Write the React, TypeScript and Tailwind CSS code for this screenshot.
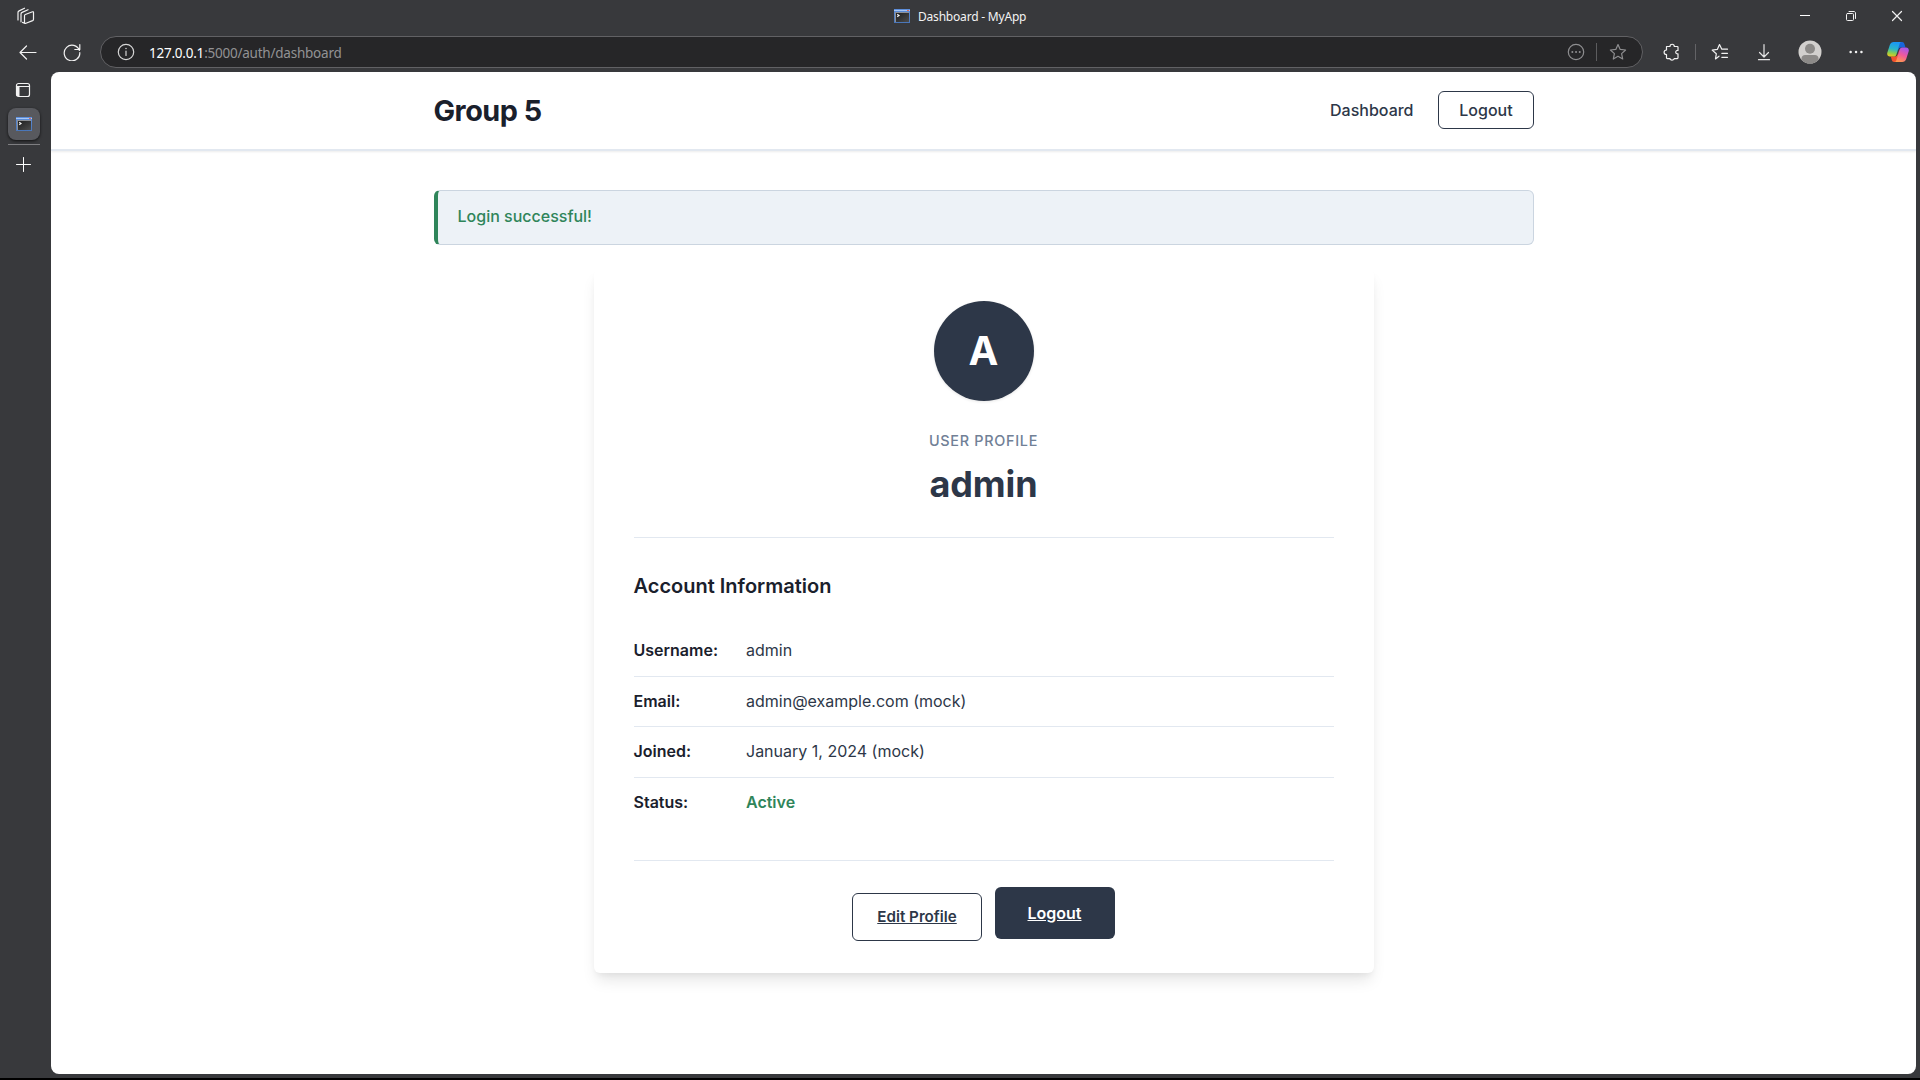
import type { ReactNode } from "react";

function TerminalIcon() {
  return (
    <svg width="16" height="15" viewBox="0 0 16 15" shapeRendering="crispEdges">
      <defs>
        <linearGradient id="term" x1="0" y1="0" x2="0" y2="1">
          <stop offset="0" stopColor="#5e8fdc" />
          <stop offset="1" stopColor="#4a76b8" />
        </linearGradient>
        <linearGradient id="screen" x1="0" y1="0" x2="1" y2="1">
          <stop offset="0" stopColor="#1c1c1c" />
          <stop offset="1" stopColor="#4a4a4a" />
        </linearGradient>
      </defs>
      <rect x="0" y="0" width="16" height="14" fill="url(#term)" />
      <rect x="0" y="1" width="16" height="1" fill="#a8c8f4" />
      <rect x="13" y="1" width="2" height="1" fill="#e06a5c" />
      <rect x="1" y="3" width="14" height="10" fill="#8d9095" />
      <rect x="1.5" y="3.5" width="13" height="9" fill="url(#screen)" />
      <path d="M3.2 5.2 5 6.5 3.2 7.8" stroke="#f2f2f2" strokeWidth="1.2" fill="none" shapeRendering="auto" />
    </svg>
  );
}

function Line({ size = 18, children, color = "#f2f2f2", className = "" }: { size?: number; children: ReactNode; color?: string; className?: string }) {
  return (
    <svg width={size} height={size} viewBox={`0 0 ${size} ${size}`} fill="none" stroke={color} strokeWidth="1.2" strokeLinecap="round" strokeLinejoin="round" className={`shrink-0 ${className}`}>
      {children}
    </svg>
  );
}

const STAR = "M9 1.6 11.2 6.4 16.6 7 12.6 10.6 13.7 16 9 13.3 4.3 16 5.4 10.6 1.4 7 6.8 6.4Z";

function Copilot() {
  return (
    <svg width="22" height="20" viewBox="0 0 22 20" className="shrink-0">
      <defs>
        <linearGradient id="cpA" x1="0.4" y1="0" x2="0.2" y2="1">
          <stop offset="0" stopColor="#1a98f5" />
          <stop offset="0.45" stopColor="#2bb6c8" />
          <stop offset="0.75" stopColor="#8fd04a" />
          <stop offset="1" stopColor="#f5c51c" />
        </linearGradient>
        <linearGradient id="cpB" x1="0.7" y1="0" x2="0.3" y2="1">
          <stop offset="0" stopColor="#a457f0" />
          <stop offset="0.5" stopColor="#f0599c" />
          <stop offset="1" stopColor="#ff9a4c" />
        </linearGradient>
      </defs>
      <path d="M12 0h3.2c1.2 0 1.8.8 2.2 1.9l1.1 3.6H14c-1.5 0-2.2.7-2.6 2L10 12Z" fill="#1766dd" />
      <path d="M10 20H7.2c-1.4 0-2-.8-2.4-2l-1-3.5H8c1.5 0 2.2-.7 2.6-2L12 8Z" fill="#f1512e" />
      <path d="M6.8 0h7.7c-1 0-1.6.8-2 2.2L9.6 12c-.5 1.8-1.300 2.600-3 2.600H3C.9 14.600-.2 13 .3 10.800L2.800 3C3.500 1 4.800 0 6.800 0Z" fill="url(#cpA)" />
      <path d="M15.200 20H7.500c1 0 1.600-.8 2-2.200L12.400 8c.5-1.800 1.300-2.600 3-2.600H19c2.100 0 3.200 1.600 2.700 3.800L19.200 17c-.7 2-2 3-4 3Z" fill="url(#cpB)" />
    </svg>
  );
}

function TitleBar() {
  return (
    <div className="flex h-8 items-center pl-[17px]">
      <Line>
        <path d="M1 13V5.500c0-.8.4-1.300 1.100-1.600L7.500 1.200" />
        <path d="M4 14.800V7c0-.8.4-1.300 1.100-1.600L11 2.700" />
        <path d="M8.300 7.500 15.500 4.800c.6-.2 1 .1 1 .7v6.700c0 .7-.3 1.100-.9 1.400L9 16.300c-.9.4-1.500 0-1.500-.8V8.800c0-.7.2-1 .8-1.300ZM7.500 16.300 5.500 15.400" />
      </Line>
      <div className="ml-[859px] flex items-center">
        <TerminalIcon />
        <span className="mt-px ml-2 w-[110px] text-[12px] leading-4 tracking-[-0.2px] whitespace-nowrap text-[#f3f3f3]">Dashboard - MyApp</span>
      </div>
      <div className="ml-auto flex items-center pr-[13px]">
        <Line size={20} className="mr-[26px]"><path d="M5 9.500h10" strokeLinecap="butt" strokeWidth="1" stroke="#fff" /></Line>
        <Line size={20} className="mr-[26px]">
          <rect x="5.500" y="7.500" width="7" height="7" rx="1" strokeWidth="1" />
          <path d="M8 5.500h5c.8 0 1.500.7 1.500 1.500v5.500" strokeWidth="1" />
        </Line>
        <Line size={20}><path d="m5.500 5.500 9 9m0-9-9 9" /></Line>
      </div>
    </div>
  );
}

function Toolbar() {
  return (
    <div className="flex h-10 items-center pl-[19px]">
      <Line className="-mt-px"><path d="M17 9.500H1M7.500 3 1 9.500 7.500 16" /></Line>
      <Line className="ml-[26px]">
        <path d="M16.400 7.500A7.800 7.800 0 1 0 16.800 9.500M16.800 1.500v5h-5" />
      </Line>
      <div className="ml-[19px] flex h-8 w-[1543px] items-center rounded-full border border-[#616164] bg-[#262628] pr-[15px] pl-4">
        <Line color="#d6d6d6">
          <circle cx="9" cy="9" r="7.700" />
          <path d="M9 8v4.500" />
          <path d="M9 5.500v.1" strokeWidth="1.500" />
        </Line>
        <span className="mt-px ml-[14px] text-[13.500px] leading-5 tracking-[-0.230px] whitespace-nowrap text-[#929294]">
          <span className="text-white">127.0.0.1</span>:5000/auth/dashboard
        </span>
        <Line color="#8e8e90" className="ml-auto">
          <circle cx="9" cy="9" r="7.700" />
          <path d="M5.300 9h.1M9 9h.1M12.700 9h.1" strokeWidth="1.900" />
        </Line>
        <span className="mr-[12px] ml-[11px] h-[18px] w-px bg-[#5c5c5e]" />
        <Line color="#8e8e90"><path d={STAR} /></Line>
      </div>
      <Line className="ml-5" size={18}>
        <path d="M3.500 3.500H7C7 .5 11.300.5 11.300 3.500h3c.4 0 .7.300.7.700v3.300c-3-.4-3 3.700 0 3.300v4c0 .500-.300.800-.8.800h-3c0 2-4.200 2-4.200 0H4.300c-.5 0-.8-.300-.8-.8V11.500C.3 11.500.3 7 3.500 7Z" />
      </Line>
      <span className="ml-[14px] h-4 w-px bg-[#636366]" />
      <Line className="ml-[15px]">
        <path d="M8 13.200 4.500 15.900 5.300 10.800 1.200 7.100 6.300 6.400 8.500 1.600 10.800 6.200H16.500M10.800 10.300h5.700M10.800 14.300h5.700" />
      </Line>
      <Line className="ml-[26px]" color="#e4e4e4">
        <path d="M9 1.500v12M4.500 9.500 9 14l4.500-4.500M3.500 16.700h11" />
      </Line>
      <svg width="24" height="24" viewBox="0 0 24 24" className="ml-[25px] shrink-0">
        <defs><clipPath id="face"><circle cx="12" cy="12" r="11.500" /></clipPath></defs>
        <circle cx="12" cy="12" r="11.500" fill="#d2d0ce" />
        <g clipPath="url(#face)" fill="#8c8a88">
          <circle cx="12" cy="8.700" r="5" />
          <path d="M3.500 24v-5.500c0-2.200 1.500-3.500 3.500-3.500h10c2 0 3.500 1.300 3.500 3.500V24Z" />
        </g>
      </svg>
      <Line className="ml-[25px]">
        <path d="M3.600 9h.1M9 9h.1M14.400 9h.1" strokeWidth="2.400" />
      </Line>
      <div className="ml-[22px]"><Copilot /></div>
    </div>
  );
}

function SideBar() {
  return (
    <div className="flex w-[51px] flex-col items-start pt-[9px]">
      <Line className="ml-[14px]">
        <rect x="2.500" y="2.500" width="13" height="13" rx="2" />
        <path d="M2.500 5.500h13" />
        <path d="M4 6v9" strokeWidth="3" strokeLinecap="butt" />
      </Line>
      <div className="mt-[9px] ml-2 flex size-8 items-center justify-center rounded-lg bg-[#58595e] shadow-[0_1px_3px_rgba(0,0,0,0.7)]">
        <TerminalIcon />
      </div>
      <span className="mt-1 ml-2 h-px w-8 bg-[#7e7e81]" />
      <Line className="mt-[10px] ml-[14px]"><path d="M9.500 2.500v14M2.500 9.500h14" strokeWidth="1" stroke="#fff" /></Line>
    </div>
  );
}

const ROWS = [
  { label: "Username:", value: "admin" },
  { label: "Email:", value: "admin@example.com (mock)" },
  { label: "Joined:", value: "January 1, 2024 (mock)" },
];

function Page() {
  return (
    <main className="mr-1 mb-1 flex flex-1 flex-col overflow-hidden rounded-lg bg-white font-[Inter,sans-serif] text-[16px] leading-[25.600px] text-[#2d3748]">
      <header className="h-[79px] shrink-0 border-b-2 border-[#e2e8f0] shadow-[0_1px_2px_rgba(0,0,0,0.08)]">
        <div className="mx-auto flex h-[77px] w-[1100px] items-center justify-between">
          <h1 className="text-[28.800px] font-bold tracking-[-0.5px] text-[#1a202c]">Group 5</h1>
          <nav className="flex items-center gap-6 font-medium">
            <a>Dashboard</a>
            <a className="-mt-px flex h-[38px] w-24 items-center justify-center rounded-md border border-[#2d3748] pt-px pl-px">Logout</a>
          </nav>
        </div>
      </header>
      <div className="mx-auto mt-[39px] h-[55px] w-[1100px] shrink-0 rounded-md border border-l-4 border-[#cbd5e0] border-l-[#2f855a] bg-[#edf2f7] pt-[13px] pl-5 font-medium text-[#2f855a]">
        Login successful!
      </div>
      <section className="mx-auto mt-6 flex h-[704px] w-[780px] shrink-0 flex-col rounded-md bg-white px-10 pt-8 shadow-[0_10px_15px_-3px_rgba(0,0,0,0.1),0_4px_6px_-2px_rgba(0,0,0,0.05)]">
        <div className="flex h-[237px] flex-col items-center border-b border-[#e2e8f0]">
          <div className="flex size-[100px] items-center justify-center rounded-full bg-[#2d3748] text-[40px] font-bold text-white shadow-[0_1px_3px_rgba(0,0,0,0.1)]">A</div>
          <p className="mt-[27px] text-[14.400px] font-medium tracking-[0.720px] text-[#718096] uppercase">User Profile</p>
          <h2 className="mt-[7px] text-[36px] leading-[46px] font-bold tracking-[-0.150px]">admin</h2>
        </div>
        <h3 className="mt-8 text-[20px] leading-8 font-semibold text-[#1a202c]">Account Information</h3>
        <dl className="mt-6 flex flex-col">
          {ROWS.map((row) => (
            <div key={row.label} className="flex h-[50.600px] items-center border-b border-[#e2e8f0]">
              <dt className="w-[112.500px] font-semibold text-[#1a202c]">{row.label}</dt>
              <dd>{row.value}</dd>
            </div>
          ))}
          <div className="flex h-[49.600px] items-center">
            <dt className="w-[112.500px] font-semibold text-[#1a202c]">Status:</dt>
            <dd className="font-semibold text-[#2f855a]">Active</dd>
          </div>
        </dl>
        <div className="mt-[33px] flex items-start justify-center border-t border-[#e2e8f0] pt-[26px]">
          <a className="mt-[6px] flex h-12 w-[130px] items-center justify-center rounded-md border border-[#2d3748] pb-px text-[15.200px] font-semibold underline">Edit Profile</a>
          <a className="ml-[13px] flex h-[52px] w-[120px] items-center justify-center rounded-md bg-[#2d3748] pr-px font-semibold text-white underline">Logout</a>
        </div>
      </section>
    </main>
  );
}

export default function App() {
  return (
    <div className="flex h-[1080px] w-[1920px] flex-col overflow-hidden border-b-2 border-black bg-[#38393c] font-['Noto_Sans',sans-serif]">
      <TitleBar />
      <Toolbar />
      <div className="flex min-h-0 flex-1">
        <SideBar />
        <Page />
      </div>
    </div>
  );
}
